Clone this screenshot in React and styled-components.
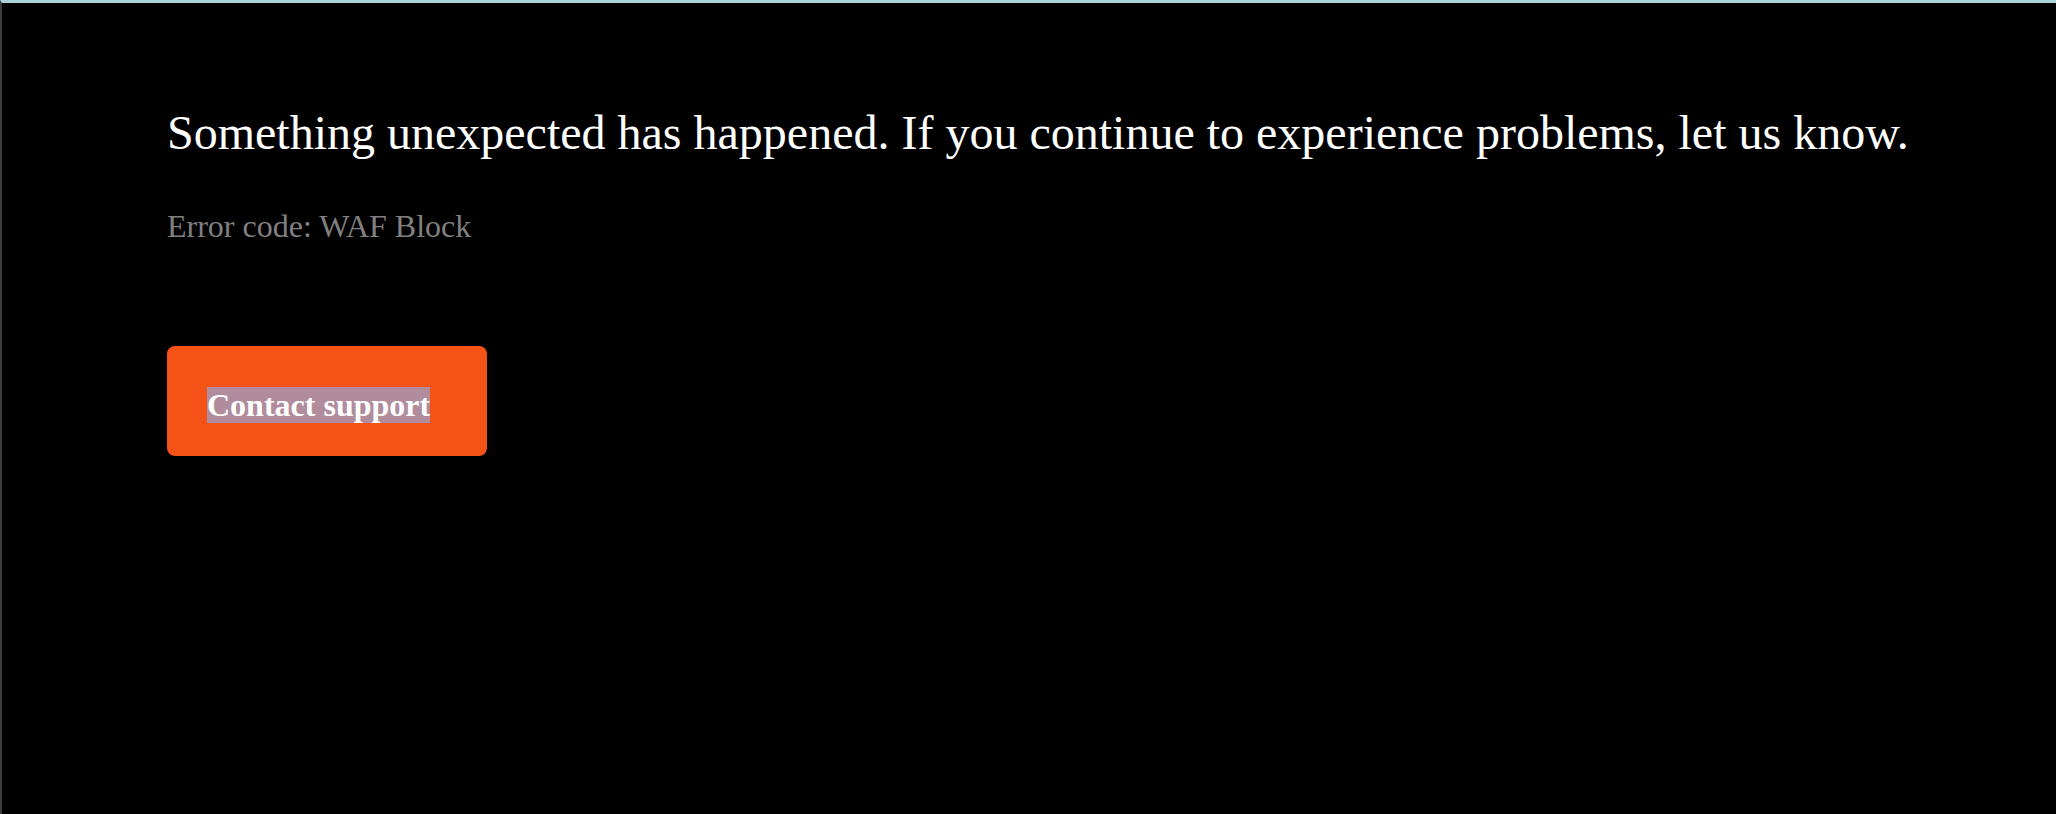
import React from "react";
import styled, { createGlobalStyle } from "styled-components";

const GlobalStyle = createGlobalStyle`
  html, body {
    margin: 0;
    padding: 0;
    background: #000;
  }
  body {
    font-family: "Liberation Serif", "Times New Roman", serif;
  }
`;

const Page = styled.div`
  box-sizing: border-box;
  min-height: 100vh;
  background: #000;
  border-top: 3px solid #a9d3d9;
  border-left: 2px solid #3d3d3d;
  display: flex;
  flex-direction: column;
  align-items: flex-start;
  padding: 103px 0 0 165px;
`;

const Heading = styled.h1`
  margin: 0;
  font-size: 48px;
  font-weight: 400;
  line-height: 53px;
  color: #fff;
`;

const ErrorCode = styled.p`
  margin: 50px 0 0 0;
  font-size: 32px;
  line-height: 35px;
  color: #808080;
`;

const SupportButton = styled.a`
  box-sizing: border-box;
  display: block;
  margin-top: 102px;
  width: 320px;
  height: 110px;
  padding: 41px 40px 0 40px;
  border-radius: 8px;
  background: #f55217;
  color: #fff;
  font-size: 32px;
  font-weight: 700;
  line-height: 37px;
  text-decoration: none;
  cursor: pointer;
`;

const Selected = styled.span`
  background: #b08c9c;
`;

export default function App() {
  return (
    <>
      <GlobalStyle />
      <Page>
        <Heading>
          Something unexpected has happened. If you continue to experience problems, let us know.
        </Heading>
        <ErrorCode>Error code: WAF Block</ErrorCode>
        <SupportButton>
          <Selected>Contact support</Selected>
        </SupportButton>
      </Page>
    </>
  );
}
